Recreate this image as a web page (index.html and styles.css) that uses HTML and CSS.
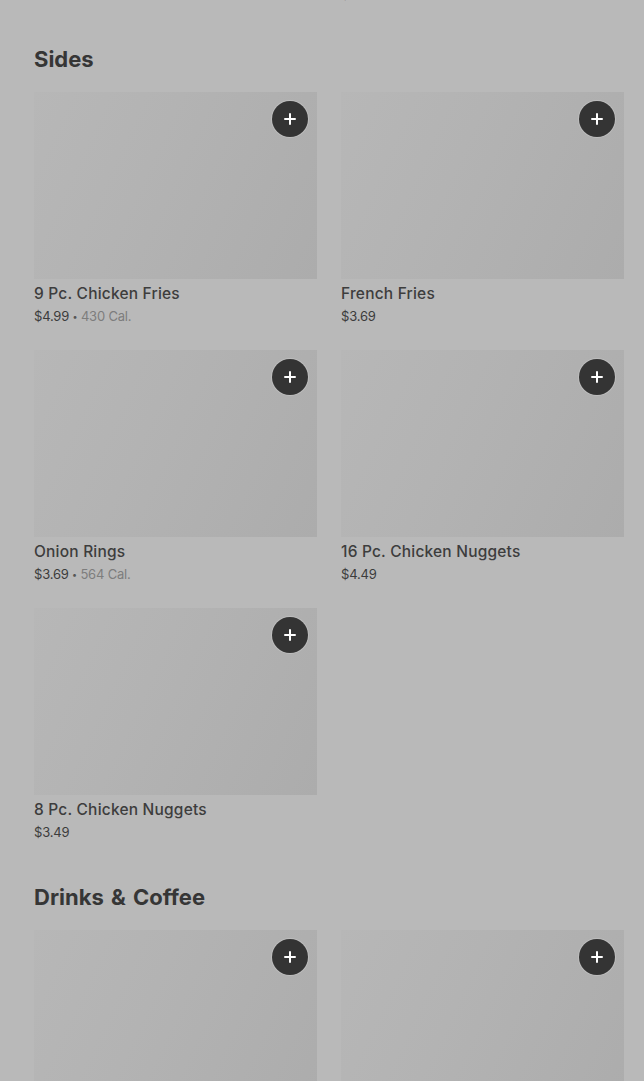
FILE: index.html
```html
<!DOCTYPE html>
<html lang="en">
<head>
<meta charset="utf-8">
<title>Menu</title>
<link rel="stylesheet" href="styles.css">
</head>
<body>
<main class="page">
  <div class="prev-row">
    <div></div>
    <div class="price">$3.49</div>
  </div>

  <section class="section">
    <h2 class="section-title">Sides</h2>
    <div class="grid">
      <article class="card">
        <div class="thumb"><button class="add" aria-label="Add"><svg viewBox="0 0 16 16" width="16" height="16"><path d="M8 3v10M3 8h10" stroke="#fff" stroke-width="2" stroke-linecap="round"/></svg></button></div>
        <div class="name">9 Pc. Chicken Fries</div>
        <div class="price">$4.99 <span class="dot">•</span> <span class="cal">430 Cal.</span></div>
      </article>
      <article class="card">
        <div class="thumb"><button class="add" aria-label="Add"><svg viewBox="0 0 16 16" width="16" height="16"><path d="M8 3v10M3 8h10" stroke="#fff" stroke-width="2" stroke-linecap="round"/></svg></button></div>
        <div class="name">French Fries</div>
        <div class="price">$3.69</div>
      </article>
      <article class="card">
        <div class="thumb"><button class="add" aria-label="Add"><svg viewBox="0 0 16 16" width="16" height="16"><path d="M8 3v10M3 8h10" stroke="#fff" stroke-width="2" stroke-linecap="round"/></svg></button></div>
        <div class="name">Onion Rings</div>
        <div class="price">$3.69 <span class="dot">•</span> <span class="cal">564 Cal.</span></div>
      </article>
      <article class="card">
        <div class="thumb"><button class="add" aria-label="Add"><svg viewBox="0 0 16 16" width="16" height="16"><path d="M8 3v10M3 8h10" stroke="#fff" stroke-width="2" stroke-linecap="round"/></svg></button></div>
        <div class="name">16 Pc. Chicken Nuggets</div>
        <div class="price">$4.49</div>
      </article>
      <article class="card">
        <div class="thumb"><button class="add" aria-label="Add"><svg viewBox="0 0 16 16" width="16" height="16"><path d="M8 3v10M3 8h10" stroke="#fff" stroke-width="2" stroke-linecap="round"/></svg></button></div>
        <div class="name">8 Pc. Chicken Nuggets</div>
        <div class="price">$3.49</div>
      </article>
    </div>
  </section>

  <section class="section">
    <h2 class="section-title">Drinks &amp; Coffee</h2>
    <div class="grid">
      <article class="card">
        <div class="thumb"><button class="add" aria-label="Add"><svg viewBox="0 0 16 16" width="16" height="16"><path d="M8 3v10M3 8h10" stroke="#fff" stroke-width="2" stroke-linecap="round"/></svg></button></div>
        <div class="name">Medium Coke</div>
        <div class="price">$1.99</div>
      </article>
      <article class="card">
        <div class="thumb"><button class="add" aria-label="Add"><svg viewBox="0 0 16 16" width="16" height="16"><path d="M8 3v10M3 8h10" stroke="#fff" stroke-width="2" stroke-linecap="round"/></svg></button></div>
        <div class="name">Iced Coffee</div>
        <div class="price">$2.49</div>
      </article>
    </div>
  </section>
</main>
</body>
</html>
```

FILE: styles.css
```css
* { box-sizing: border-box; }

html, body {
  margin: 0;
  padding: 0;
  background: #b9b9b9;
  overflow: hidden;
}

body {
  font-family: Inter, "Noto Sans", "Liberation Sans", sans-serif;
  color: #3a3a3a;
}

.page {
  padding: 0 0 0 34px;
}

.prev-row {
  display: grid;
  grid-template-columns: 283px 283px;
  column-gap: 24px;
  margin-top: -18px;
}

.section {
  margin-top: 38px;
}

.section-title {
  margin: 0 0 17px;
  font-size: 22px;
  line-height: 32px;
  font-weight: 700;
  letter-spacing: 0;
  word-spacing: 2px;
  color: #363636;
}

.grid {
  display: grid;
  grid-template-columns: 283px 283px;
  column-gap: 24px;
  row-gap: 23px;
}

.card {
  display: flex;
  flex-direction: column;
}

.thumb {
  position: relative;
  height: 187px;
  background: linear-gradient(115deg, #b7b7b7 0%, #b3b3b3 40%, #acacac 100%);
}

.add {
  position: absolute;
  top: 9px;
  right: 9px;
  width: 36px;
  height: 36px;
  border: 0;
  padding: 0;
  border-radius: 50%;
  background: #343434;
  box-shadow: 0 0 0 1px rgba(255, 255, 255, 0.18);
  display: flex;
  align-items: center;
  justify-content: center;
}

.add svg { display: block; }

.name {
  margin-top: 5px;
  height: 20px;
  font-size: 15.5px;
  line-height: 20px;
  font-weight: 500;
  color: #3d3d3d;
  letter-spacing: 0.2px;
}

.price {
  height: 23px;
  padding-top: 1px;
  font-size: 13px;
  line-height: 23px;
  color: #3c3c3c;
  letter-spacing: -0.2px;
}

.dot {
  font-size: 9px;
  line-height: 0;
  vertical-align: 1px;
  color: #555;
}

.cal {
  color: #7d7d7d;
}
```
